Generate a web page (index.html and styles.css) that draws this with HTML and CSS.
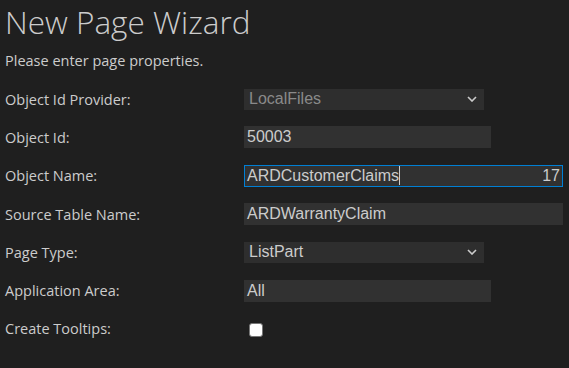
FILE: index.html
```html
<!DOCTYPE html>
<html lang="en">
<head>
    <meta charset="UTF-8">
    <title>New Page Wizard</title>
    <link rel="stylesheet" href="styles.css">
</head>
<body>
    <h1 class="title">New Page Wizard</h1>
    <p class="subtitle">Please enter page properties.</p>
    <form class="wizard-form">
        <label class="field-label">Object Id Provider:</label>
        <div class="field">
            <div class="select select-narrow disabled">
                <span>LocalFiles</span>
                <svg class="chevron" width="10" height="6" viewBox="0 0 10 6"><path d="M1 1l4 4 4-4" fill="none" stroke="currentColor" stroke-width="1.6"/></svg>
            </div>
        </div>

        <label class="field-label">Object Id:</label>
        <div class="field">
            <div class="input input-medium">50003</div>
        </div>

        <label class="field-label">Object Name:</label>
        <div class="field">
            <div class="input input-wide focused">
                <span>ARDCustomerClaims<span class="caret"></span></span>
                <span class="counter">17</span>
            </div>
        </div>

        <label class="field-label">Source Table Name:</label>
        <div class="field">
            <div class="input input-wide">ARDWarrantyClaim</div>
        </div>

        <label class="field-label">Page Type:</label>
        <div class="field">
            <div class="select select-narrow">
                <span>ListPart</span>
                <svg class="chevron" width="10" height="6" viewBox="0 0 10 6"><path d="M1 1l4 4 4-4" fill="none" stroke="currentColor" stroke-width="1.6"/></svg>
            </div>
        </div>

        <label class="field-label">Application Area:</label>
        <div class="field">
            <div class="input input-medium">All</div>
        </div>

        <label class="field-label">Create Tooltips:</label>
        <div class="field">
            <span class="checkbox"></span>
        </div>
    </form>
</body>
</html>
```

FILE: styles.css
```css
body {
    margin: 0;
    padding: 0 5px;
    background-color: #1f1f1f;
    color: #cccccc;
    font-family: "Open Sans", "Noto Sans", sans-serif;
}
.title {
    font-size: 31.5px;
    font-weight: 300;
    line-height: 44px;
    margin: 0;
    color: #cccccc;
}
.subtitle {
    font-size: 14.5px;
    margin: 7px 0 0 0;
    line-height: 20px;
}
.wizard-form {
    display: grid;
    grid-template-columns: 239px 1fr;
    grid-auto-rows: 38.3px;
    margin-top: 9px;
}
.field-label {
    font-size: 14.5px;
    display: flex;
    align-items: center;
}
.field {
    display: flex;
    align-items: center;
}
.input, .select {
    box-sizing: border-box;
    height: 22px;
    background-color: #313131;
    font-family: "Liberation Sans", Arial, sans-serif;
    font-size: 16px;
    color: #cccccc;
    display: flex;
    align-items: center;
    padding: 0 2px;
    border: 1px solid transparent;
}
.select {
    height: 21px;
    padding: 0 6px 0 4px;
    justify-content: space-between;
    background-color: #2e2e2e;
}
.select-narrow {
    width: 240px;
}
.input-medium {
    width: 247px;
}
.input-wide {
    width: 319px;
}
.focused {
    border-color: #007fd4;
    justify-content: space-between;
}
.disabled {
    color: #8a8a8a;
}
.chevron {
    color: #cccccc;
}
.caret {
    display: inline-block;
    width: 1px;
    height: 19px;
    background: #cccccc;
    vertical-align: -4px;
}
.counter {
    font-size: 16px;
}
.checkbox {
    box-sizing: border-box;
    width: 14px;
    height: 14px;
    margin: 2px 0 0 5px;
    background: #ffffff;
    border: 1px solid #767676;
    border-radius: 3px;
}
```
